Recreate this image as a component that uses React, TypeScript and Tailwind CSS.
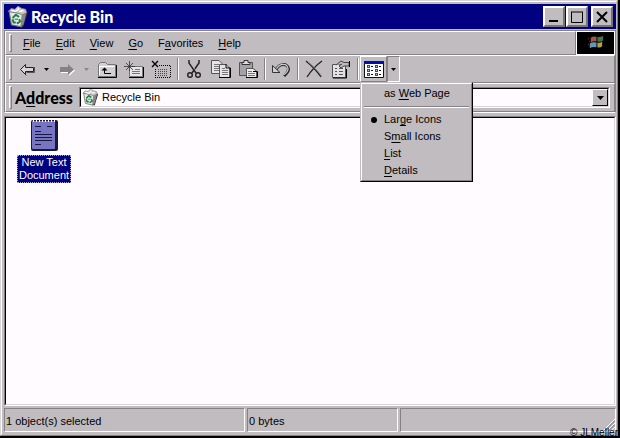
import { useState } from "react";
import type { ReactNode } from "react";
import clsx from "clsx";

const views = [
  { id: "large", before: "Lar", key: "g", after: "e Icons" },
  { id: "small", before: "S", key: "m", after: "all Icons" },
  { id: "list", before: "", key: "L", after: "ist" },
  { id: "details", before: "", key: "D", after: "etails" },
];

const menus = [
  { before: "", key: "F", after: "ile" },
  { before: "", key: "E", after: "dit" },
  { before: "", key: "V", after: "iew" },
  { before: "", key: "G", after: "o" },
  { before: "F", key: "a", after: "vorites" },
  { before: "", key: "H", after: "elp" },
];

function Hot({ before, k, after }: { before: string; k: string; after: string }) {
  return (
    <span>
      {before}
      <span className="underline underline-offset-2">{k}</span>
      {after}
    </span>
  );
}

function BinIcon({ className }: { className?: string }) {
  return (
    <svg viewBox="0 0 20 20" className={className} aria-hidden="true">
      <path d="M15 5 L19 6 L15 19 L12 19 Z" fill="#302c30" />
      <path d="M2 5 L14 7 L13 19 L4 17 Z" fill="#e8e6e8" stroke="#777" />
      <path d="M14 7 L18 5 L15 17 L12 19 Z" fill="#8a858a" />
      <path d="M1 5 L4 2 L7 3 L10 0 L13 2 L17 3 L18 6 L14 8 L8 6 Z" fill="#c8c5c8" stroke="#777" strokeWidth=".7" />
      <path d="M4 4 L8 5 L11 2 M11 5 L15 4" stroke="#fff" strokeWidth="1.4" fill="none" />
      <path d="M5 11 L8 8 L11 10 M5 12 L6 15 H8 M9 16 L12 14 L11 12" stroke="#16843a" strokeWidth="1.8" fill="none" />
      <path d="M7 12 H10" stroke="#16843a" />
    </svg>
  );
}

function Glyph({ children }: { children: ReactNode }) {
  return (
    <svg viewBox="0 0 20 20" className="size-5 shrink-0" fill="none" stroke="#000" aria-hidden="true">
      {children}
    </svg>
  );
}

const BackIcon = () => (
  <Glyph>
    <path d="M9.5 16.5 L4 11 M9.5 13.5 H17.5 V8" stroke="#555" />
    <path d="M8.5 5.5 L3.5 10.5 L8.5 15.5 V12.5 H16.5 V8.5 H8.5 Z" fill="#d8d5d8" stroke="#222" />
  </Glyph>
);

const ForwardIcon = () => (
  <Glyph>
    <path d="M4 9 H12 V6 L18 11.5 L12 17 V14 H4 Z" fill="#fff" stroke="none" />
    <path d="M3 8 H11 V5 L17 10.5 L11 16 V13 H3 Z" fill="#858185" stroke="none" />
  </Glyph>
);

const UpIcon = () => (
  <Glyph>
    <path d="M1.5 17.5 V5.5 L3.5 3.5 H8.5 L10.5 5.5 H18.5 V17.5 Z" fill="#d4d1d4" stroke="#777" />
    <path d="M2.5 16 V7.5 H17.5" stroke="#fff" />
    <path d="M1 18.5 H19.5 V6" />
    <path d="M7.5 9 V14.5 H14" />
    <path d="M4.5 11.5 L7.5 8.5 L10.5 11.5 Z" fill="#000" stroke="none" />
  </Glyph>
);

const FavoriteIcon = () => (
  <Glyph>
    <path d="M7.5 7.5 H18.5 V17.5 H5.5 V11" fill="#e8e5e8" stroke="#777" />
    <path d="M5 18.5 H19.5 V8" />
    <path d="M11 10.5 H16 M8 12.5 H16 M8 14.5 H16" stroke="#777" />
    <path d="M5.5 2 V12 M0 7.5 H11 M2 4 L9 11 M9 4 L2 11" stroke="#333" strokeWidth=".8" />
  </Glyph>
);

const UnfavoriteIcon = () => (
  <Glyph>
    <path d="M1 2 L7 8 M7 2 L1 8" strokeWidth="1.4" />
    <path d="M8 6.5 H19 M4 18.5 H19 M4.5 10 V18 M19.5 7 V18" strokeDasharray="1 1" />
    <path d="M7 10.5 H17 M7 12.5 H17 M7 14.5 H17 M7 16.5 H17" strokeDasharray="1 1" stroke="#444" />
  </Glyph>
);

const CutIcon = () => (
  <Glyph>
    <path d="M5 1 V4 L12 14 M15 1 V4 L8 14" stroke="#222" strokeWidth="1.5" />
    <path d="M6.5 2 V4 L12 12" stroke="#bbb" strokeWidth=".7" />
    <circle cx="6" cy="16" r="2.3" stroke="#222" strokeWidth="1.4" />
    <circle cx="14" cy="16" r="2.3" stroke="#222" strokeWidth="1.4" />
  </Glyph>
);

const CopyIcon = () => (
  <Glyph>
    <path d="M.5 1.5 H8 L11.5 5 V14.5 H.5 Z" fill="#e8e5e8" stroke="#555" />
    <path d="M3 5.5 H8 M3 7.5 H8 M3 9.5 H8 M3 11.5 H8" stroke="#777" />
    <path d="M8.5 5.5 H15 L18.5 9 V18.5 H8.5 Z" fill="#e8e5e8" stroke="#555" />
    <path d="M8 18.5 H19.5 V9 H15 V5" />
    <path d="M11 9.5 H14 M11 11.5 H17 M11 13.5 H17 M11 15.5 H17" stroke="#777" />
  </Glyph>
);

const PasteIcon = () => (
  <Glyph>
    <path d="M1.5 3.5 H14.5 V16.5 H1.5 Z" fill="#a5a1a5" stroke="#555" />
    <path d="M4 5.5 V3.5 L6 3.5 V1.5 H10 V3.5 H12 V5.5 Z" fill="#e0dde0" stroke="#333" />
    <path d="M8.5 9.5 H15 L18.5 12 V18.5 H8.5 Z" fill="#eee" stroke="#555" />
    <path d="M8 18.5 H19.5 V12.5 H15" />
    <path d="M10 12.5 H14 M10 14.5 H17 M10 16.5 H17" stroke="#777" />
  </Glyph>
);

const UndoIcon = () => (
  <Glyph>
    <path d="M5 11 C8 4 17 4 17.5 10 C17.5 13 15 15 13 17" stroke="#222" strokeWidth="3" />
    <path d="M5 10.5 C9 3.5 16.5 4 17 10 C17 13 14.5 14.5 12.5 16" stroke="#ccc" strokeWidth="1.3" />
    <path d="M1.5 6.5 V13.5 H9 Z" fill="#d0cdd0" stroke="#333" />
  </Glyph>
);

const DeleteIcon = () => (
  <Glyph>
    <path d="M2 2 C8 7 13 12 17 18 M18 2 C11 7 7 12 3 18" stroke="#222" strokeWidth="1.3" />
    <path d="M4 3 C9 7 14 12 18 17" stroke="#888" strokeWidth=".8" />
  </Glyph>
);

const PropertiesIcon = () => (
  <Glyph>
    <path d="M1.5 5.5 H14.5 V18.5 H1.5 Z" fill="#e5e2e5" stroke="#555" />
    <path d="M2 19 H15.5 V10" />
    <path d="M4 9.5 H6 M8 9.5 H12 M4 12.5 H6 M8 12.5 H12 M4 15.5 H6 M8 15.5 H12" stroke="#555" />
    <path d="M5 6 L10 2 L13 3.5 H18 V7 H13 L10 9 L8 7 L11 5" fill="#bbb" stroke="#444" />
    <path d="M18.5 2 V8" />
  </Glyph>
);

function ViewsIcon() {
  return (
    <svg viewBox="0 0 20 17" className="h-[17px] w-5" aria-hidden="true">
      <path d="M.5 .5 H19.5 V16.5 H.5 Z" fill="#fff" stroke="#111" />
      <path d="M0 0 H20 V3 H0 Z" fill="#0010b0" />
      {[4, 8, 12].map((y) => (
        <g key={y}>
          <path d={`M3 ${y} h3 v3 h-3 z M11 ${y} h3 v3 h-3 z`} fill="#284a9c" />
          <path d={`M4 ${y + 1} h1 v1 h-1 z M12 ${y + 1} h1 v1 h-1 z`} fill="#b8c8f0" />
          <path d={`M7 ${y + 1.5} h2 M15 ${y + 1.5} h2`} stroke="#111" />
        </g>
      ))}
    </svg>
  );
}

function WindowsLogo() {
  return (
    <svg viewBox="0 0 38 22" className="h-[21px] w-[37px]" aria-hidden="true">
      <path d="M0 0 H38 V22 H0 Z" fill="#000" />
      <path d="M11 7 h2 M12 10 h2 M11 13 h2" stroke="#702c2c" strokeWidth="1.5" strokeDasharray="1 1" />
      <path d="M14 6 Q17 4 20 5 V10 Q17 9 14 11 Z" fill="#a05848" />
      <path d="M21 5 Q24 6 27 4 V9 Q24 11 21 10 Z" fill="#48744c" />
      <path d="M13 12 Q16 10 20 11 V16 Q16 15 13 17 Z" fill="#6098b8" />
      <path d="M21 11 Q24 12 26 10 V15 Q24 17 21 16 Z" fill="#b89c48" />
    </svg>
  );
}

function Arrow({ dim }: { dim?: boolean }) {
  return (
    <svg viewBox="0 0 5 3" className="h-[3px] w-[5px]" aria-hidden="true">
      <path d="M0 0 H5 L2.5 3 Z" fill={dim ? "#888" : "#000"} />
    </svg>
  );
}

function Grip() {
  return <div className="my-[2px] ml-[3px] w-[3px] shrink-0 border border-[#858185] border-t-white border-l-white" />;
}

function Divider() {
  return <div className="my-[2px] mr-px ml-[3px] w-[2px] shrink-0 border-l border-[#858185] border-r border-r-white" />;
}

function Tool({ label, children }: { label: string; children: ReactNode }) {
  return (
    <button type="button" aria-label={label} className="flex w-[27px] shrink-0 items-center justify-center">
      {children}
    </button>
  );
}

const caption = "flex h-[21px] w-[22px] items-center justify-center border-2 border-[#777377] border-t-white border-l-white bg-[#c0bcc0]";
const band = "flex border border-[#858185] border-t-white border-l-white";
const sunken = "border border-white border-t-[#858185] border-l-[#858185]";

export default function App() {
  const [view, setView] = useState("large");
  const [open, setOpen] = useState(true);

  return (
    <div className="relative flex h-screen flex-col border-r-2 border-b-2 border-black bg-[#c0bcc0] font-['Liberation_Sans'] text-[11px] leading-[13px] text-black">
      <div className="flex min-h-0 flex-1 flex-col border border-[#858185] border-t-[#d8d5d8] border-l-[#d8d5d8]">
        <div className="flex min-h-0 flex-1 flex-col border border-[#c0bcc0] border-t-white border-l-white py-[2px] pl-[2px]">
          <header className="flex h-[25px] shrink-0 items-center bg-[#000080] px-[3px] text-white">
            <BinIcon className="h-[22px] w-[22px]" />
            <h1 className="ml-[2px] flex-1 font-['Lato'] text-[16px] leading-5 font-black">Recycle Bin</h1>
            <button type="button" aria-label="Minimize" className={caption}>
              <svg viewBox="0 0 14 14" className="size-[14px]"><path d="M2 11 H11" stroke="#000" strokeWidth="2" /></svg>
            </button>
            <button type="button" aria-label="Maximize" className={clsx(caption, "ml-px")}>
              <svg viewBox="0 0 14 14" className="size-[14px]"><path d="M1.5 2 V12.5 H12.5 V2 M1 2 H13" fill="none" stroke="#000" /></svg>
            </button>
            <button type="button" aria-label="Close" className={clsx(caption, "ml-[3px]")}>
              <svg viewBox="0 0 14 14" className="size-[14px]"><path d="M2 2 L12 12 M12 2 L2 12" stroke="#000" strokeWidth="2" /></svg>
            </button>
          </header>

          <div className="mt-px shrink-0 border border-[#858185] border-b-white">
            <div className="flex h-6">
              <nav className={clsx(band, "flex-1")}>
                <Grip />
                <div className="ml-1 flex items-center">
                  {menus.map((m) => (
                    <button key={m.key} type="button" className="pr-2 pl-[7px] text-left">
                      <Hot before={m.before} k={m.key} after={m.after} />
                    </button>
                  ))}
                </div>
              </nav>
              <div className="border border-white bg-black">
                <WindowsLogo />
              </div>
            </div>

            <div className={clsx(band, "h-7")} role="toolbar">
              <Grip />
              <div className="ml-px flex flex-1">
                <Tool label="Back"><BackIcon /></Tool>
                <button type="button" aria-label="Back history" className="flex w-[13px] items-center justify-center"><Arrow /></button>
                <Tool label="Forward"><ForwardIcon /></Tool>
                <button type="button" aria-label="Forward history" className="flex w-[13px] items-center justify-center"><Arrow dim /></button>
                <Tool label="Up"><UpIcon /></Tool>
                <Tool label="Add to favorites"><FavoriteIcon /></Tool>
                <Tool label="Remove"><UnfavoriteIcon /></Tool>
                <Divider />
                <Tool label="Cut"><CutIcon /></Tool>
                <Tool label="Copy"><CopyIcon /></Tool>
                <Tool label="Paste"><PasteIcon /></Tool>
                <Divider />
                <Tool label="Undo"><UndoIcon /></Tool>
                <Divider />
                <Tool label="Delete"><DeleteIcon /></Tool>
                <Tool label="Properties"><PropertiesIcon /></Tool>
                <Divider />
                <div className="relative flex">
                  <button type="button" aria-label="Views" className="flex w-[27px] items-center justify-center border border-[#858185] border-t-white border-l-white">
                    <ViewsIcon />
                  </button>
                  <button
                    type="button"
                    aria-label="Choose view"
                    aria-expanded={open}
                    onClick={() => setOpen(!open)}
                    className={clsx(sunken, "flex w-[13px] items-center justify-center")}
                  >
                    <Arrow />
                  </button>
                  {open && (
                    <div className="absolute top-full left-0 z-10 w-[113px] border border-black border-t-[#c0bcc0] border-l-[#c0bcc0] bg-[#c0bcc0]">
                      <div className="flex flex-col border border-[#858185] border-t-white border-l-white px-[2px] py-px">
                        <button type="button" className="h-[17px] pl-5 text-left">
                          <Hot before="as " k="W" after="eb Page" />
                        </button>
                        <div className="mt-1 mb-[3px] h-[2px] border-t border-b border-t-[#858185] border-b-white" />
                        {views.map((v) => (
                          <button key={v.id} type="button" onClick={() => setView(v.id)} className="flex h-[17px] items-center">
                            <span className="flex w-5 justify-center">
                              {view === v.id && <span className="size-[6px] rounded-full bg-black" />}
                            </span>
                            <Hot before={v.before} k={v.key} after={v.after} />
                          </button>
                        ))}
                      </div>
                    </div>
                  )}
                </div>
              </div>
            </div>

            <div className={clsx(band, "h-[29px]")}>
              <Grip />
              <label htmlFor="address" className="ml-[3px] flex w-16 items-center font-['Lato'] text-[16px] leading-5 font-black">
                <Hot before="A" k="d" after="dress" />
              </label>
              <div className={clsx(sunken, "my-[3px] mr-1 flex flex-1 items-center")}>
                <div className="flex h-full flex-1 items-center border border-[#d8d5d8] border-t-black border-l-black bg-[#fffbff]">
                  <BinIcon className="ml-px size-[17px]" />
                  <input id="address" defaultValue="Recycle Bin" className="ml-[3px] min-w-0 flex-1 bg-transparent outline-none" />
                  <button type="button" aria-label="Show addresses" className="flex h-full w-4 items-center justify-center border border-black border-t-white border-l-white bg-[#c0bcc0]">
                    <svg viewBox="0 0 7 4" className="h-1 w-[7px]"><path d="M0 0 H7 L3.5 4 Z" /></svg>
                  </button>
                </div>
              </div>
            </div>
          </div>

          <main className={clsx(sunken, "mt-[3px] flex min-h-0 flex-1")}>
            <div className="flex-1 border border-[#d8d5d8] border-t-black border-l-black bg-[#fffbff] px-[11px]">
              <button type="button" className="mt-px flex w-[54px] flex-col items-center">
                <svg viewBox="0 0 27 32" className="h-8 w-[27px]" aria-hidden="true">
                  <rect x="0" y="1" width="27" height="31" rx="2" fill="#18183c" />
                  <rect x="1" y="2" width="23" height="28" rx="1" fill="#7774c4" />
                  <path d="M2 2 H25" stroke="#fffbff" strokeWidth="2" strokeDasharray="1 2" />
                  <path d="M4 7.5 H10 M16 7.5 H21 M4 12.5 H10 M4 15.5 H21 M4 18.5 H21 M4 21.5 H21 M4 25.5 H10" stroke="#18183c" />
                </svg>
                <span className="mt-1 border border-dotted border-[#a4a4d8] bg-[#000080] px-px text-center text-white">
                  New Text Document
                </span>
              </button>
            </div>
          </main>

          <footer className="mt-[2px] flex h-6 shrink-0 gap-[2px]">
            <div className={clsx(sunken, "flex flex-[241] items-center px-px pt-[3px]")}>1 object(s) selected</div>
            <div className={clsx(sunken, "flex flex-[149] items-center px-px pt-[3px]")}>0 bytes</div>
            <div className={clsx(sunken, "flex flex-[218] items-end justify-end")}>
              <svg viewBox="0 0 12 12" className="size-3" aria-hidden="true">
                <path d="M0 12 L12 0 M4 12 L12 4 M8 12 L12 8" stroke="#fff" />
                <path d="M1.5 12 L12 1.5 M5.5 12 L12 5.5" stroke="#777" />
              </svg>
            </div>
          </footer>
        </div>
      </div>
      <small className="absolute right-0 -bottom-[2px] text-[10px] leading-[11px]">© JLMeller</small>
    </div>
  );
}
